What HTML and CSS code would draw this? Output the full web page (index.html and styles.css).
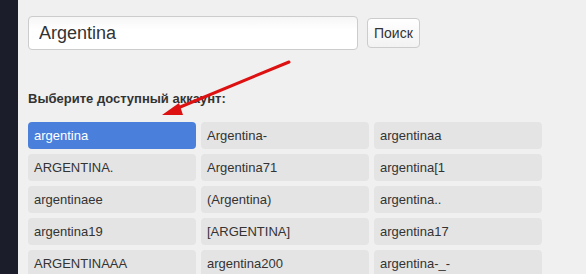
FILE: index.html
```html
<!DOCTYPE html>
<html lang="ru">
<head>
  <meta charset="UTF-8" />
  <title>Поиск аккаунта</title>
  <link rel="stylesheet" href="styles.css">
</head>
<body>
<div class="panel">
  <form class="search">
    <input type="text" class="query" value="Argentina" />
    <button type="button" class="btn">Поиск</button>
  </form>

  <h3 class="label">Выберите доступный аккаунт:</h3>

  <div class="accounts">
    <div class="acc active">argentina</div>
    <div class="acc">Argentina-</div>
    <div class="acc">argentinaa</div>
    <div class="acc">ARGENTINA.</div>
    <div class="acc">Argentina71</div>
    <div class="acc">argentina[1</div>
    <div class="acc">argentinaee</div>
    <div class="acc">(Argentina)</div>
    <div class="acc">argentina..</div>
    <div class="acc">argentina19</div>
    <div class="acc">[ARGENTINA]</div>
    <div class="acc">argentina17</div>
    <div class="acc">ARGENTINAAA</div>
    <div class="acc">argentina200</div>
    <div class="acc">argentina-_-</div>
  </div>

  <svg class="arrow" width="140" height="62" viewBox="0 0 140 62">
    <line x1="136" y1="3" x2="20" y2="51" stroke="#dd1111" stroke-width="3" stroke-linecap="round"/>
    <polygon points="9,56 26,44 30,56" fill="#dd1111"/>
  </svg>
</div>
</body>
</html>
```

FILE: styles.css
```css
html, body { margin: 0; height: 100%; }
body { background: #1b1d2a; font-family: "Liberation Sans", Arial, sans-serif; color: #333; overflow: hidden; }
.panel { position: relative; margin-left: 18px; height: 100%; background: #f0f0f0; padding: 16px 10px; box-sizing: border-box; }
.search { display: flex; align-items: center; gap: 9px; margin: 0; }
.query { width: 330px; height: 34px; box-sizing: border-box; padding: 0 10px; font: 18px "Liberation Sans", Arial, sans-serif; color: #333;
  border: 1px solid #ccc; border-radius: 4px; background: linear-gradient(#f6f6f6, #fff 40%); outline: none; }
.btn { height: 30px; padding: 0 6px; font: 14px "Liberation Sans", Arial, sans-serif; color: #333; background: linear-gradient(#fff, #f2f2f2);
  border: 1px solid #ccc; border-radius: 4px; cursor: pointer; }
.label { font-size: 13px; font-weight: bold; margin: 41px 0 15px; line-height: 16px; }
.accounts { display: grid; grid-template-columns: repeat(3, 168px); grid-auto-rows: 27px; gap: 5px; }
.acc { background: #e4e4e4; border-radius: 4px; font-size: 13px; padding: 0 6px; display: flex; align-items: center; }
.acc.active { background: #4a7fdc; color: #fff; }
.arrow { position: absolute; left: 135px; top: 59px; }
```
